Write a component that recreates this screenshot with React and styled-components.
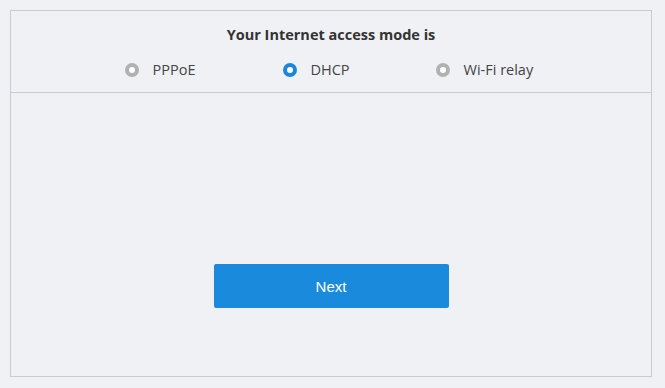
import React, { useState } from 'react';
import styled, { createGlobalStyle } from 'styled-components';

const GlobalStyle = createGlobalStyle`
  html, body {
    margin: 0;
    padding: 0;
    background: #f0f1f5;
  }
  body {
    font-family: "Open Sans", "Noto Sans", sans-serif;
  }
`;

const Page = styled.div`
  padding: 10px 13px 11px 10px;
`;

const Panel = styled.div`
  height: 365px;
  border: 1px solid #c9cbd0;
  display: flex;
  flex-direction: column;
`;

const Header = styled.div`
  height: 81px;
  border-bottom: 1px solid #c9cbd0;
  display: flex;
  flex-direction: column;
  align-items: center;
`;

const Title = styled.h2`
  margin: 14px 0 0;
  font-size: 14.5px;
  font-weight: 700;
  color: #333;
  line-height: 20px;
`;

const Options = styled.div`
  display: flex;
  margin-top: 15px;
`;

const Option = styled.label`
  display: flex;
  align-items: center;
  gap: 14px;
  width: ${(p) => (p.$width ? `${p.$width}px` : 'auto')};
  font-size: 14.5px;
  color: #444;
  cursor: pointer;
  line-height: 20px;
`;

const Dot = styled.span`
  width: 14px;
  height: 14px;
  box-sizing: border-box;
  border-radius: 50%;
  border: 4.5px solid ${(p) => (p.$on ? '#1a87d9' : '#b1b1b1')};
  background: #fff;
`;

const Body = styled.div`
  flex: 1;
  display: flex;
  flex-direction: column;
  justify-content: flex-end;
  align-items: center;
  padding-bottom: 68px;
`;

const Button = styled.button`
  width: 235px;
  height: 44px;
  border: none;
  border-radius: 2px;
  background: #1a8bdc;
  color: #fff;
  font-family: "Liberation Sans", Arial, sans-serif;
  font-size: 15px;
  cursor: pointer;
`;

const modes = [
  { label: 'PPPoE', width: 158 },
  { label: 'DHCP', width: 153 },
  { label: 'Wi-Fi relay', width: 102 },
];

export default function App() {
  const [mode, setMode] = useState('DHCP');

  return (
    <Page>
      <GlobalStyle />
      <Panel>
        <Header>
          <Title>Your Internet access mode is</Title>
          <Options>
            {modes.map((m) => (
              <Option key={m.label} $width={m.width} onClick={() => setMode(m.label)}>
                <Dot $on={mode === m.label} />
                {m.label}
              </Option>
            ))}
          </Options>
        </Header>
        <Body>
          <Button>Next</Button>
        </Body>
      </Panel>
    </Page>
  );
}
